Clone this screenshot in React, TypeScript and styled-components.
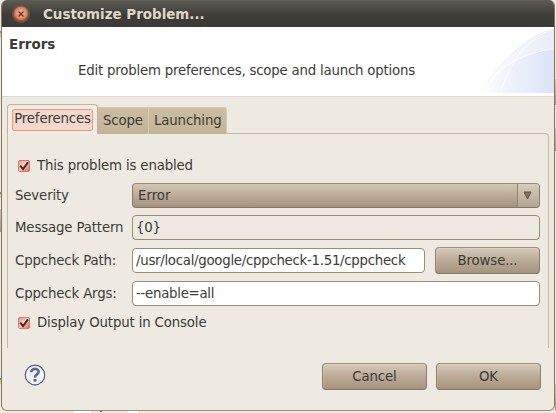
import React from "react";
import styled, { createGlobalStyle, css } from "styled-components";

const Global = createGlobalStyle`
  * { box-sizing: border-box; }
  html, body { margin: 0; padding: 0; width: 556px; height: 413px; overflow: hidden; }
  body { font-family: "DejaVu Sans", sans-serif; font-size: 13.33px; letter-spacing: -0.15px; line-height: 16px; color: #3c3b37; background: #eeeae2; }
`;

const Desktop = styled.div`
  width: 556px;
  height: 413px;
  padding: 0 1px 2px 1px;
  background:
    linear-gradient(#4aa3e0, #4aa3e0) 0 31px / 1px 2px no-repeat,
    linear-gradient(#f3c766, #f3c766) 0 33px / 1px 4px no-repeat,
    linear-gradient(#4aa3e0, #4aa3e0) 0 192px / 1px 2px no-repeat,
    linear-gradient(#f3c766, #f3c766) 0 194px / 1px 4px no-repeat,
    linear-gradient(#cfc4b4, #a89a86) 0 209px / 1px 23px no-repeat,
    linear-gradient(#4aa3e0, #4aa3e0) 0 378px / 1px 2px no-repeat,
    linear-gradient(#f3c766, #f3c766) 0 380px / 1px 4px no-repeat,
    linear-gradient(#d5cabb, #a5957f) 555px 79px / 1px 26px no-repeat,
    linear-gradient(#d5cabb, #a5957f) 555px 128px / 1px 23px no-repeat,
    linear-gradient(#d5cabb, #a5957f) 555px 384px / 1px 27px no-repeat,
    linear-gradient(#ffffff, #ffffff) 74px 411px / 17px 2px no-repeat,
    linear-gradient(#55534c, #55534c) 100px 411px / 2px 1px no-repeat,
    linear-gradient(#ffffff, #ffffff) 128px 411px / 10px 2px no-repeat,
    #efe9df;
`;

const Window = styled.div`
  width: 554px;
  height: 411px;
  display: flex;
  flex-direction: column;
  border: 1px solid #85775f;
  border-top: 0;
  border-bottom-color: #a08e6e;
  border-radius: 6px;
  background: #eeeae2;
  overflow: hidden;
`;

const TitleBar = styled.header`
  height: 27px;
  flex: none;
  display: flex;
  align-items: center;
  gap: 12px;
  padding: 1px 0 0 9px;
  color: #dfd8c8;
  font-size: 13.45px;
  letter-spacing: 0;
  font-weight: bold;
  background: linear-gradient(#66614f 0, #5b5a52 1px, #3d3c37 15px, #3c3b37 100%);
`;

const TitleText = styled.span`
  padding-top: 1px;
`;

const Banner = styled.section`
  position: relative;
  height: 69px;
  flex: none;
  padding: 10px 7px;
  background: #fff;
`;

const BannerTitle = styled.h1`
  margin: 0;
  font-size: 13.45px;
  letter-spacing: 0;
  line-height: 16px;
`;

const BannerText = styled.p`
  margin: 10px 0 0 69px;
  letter-spacing: -0.21px;
`;

const BannerArt = styled.svg`
  position: absolute;
  right: 0;
  top: 0;
`;

const Body = styled.main`
  flex: 1;
  border-top: 1px solid #e0d9cb;
  padding: 7px 5px 0;
`;

const Tabs = styled.nav`
  display: flex;
  align-items: flex-end;
  height: 30px;
  position: relative;
  z-index: 1;
`;

const Tab = styled.button<{ $active?: boolean }>`
  font: inherit;
  letter-spacing: inherit;
  color: inherit;
  margin: 0;
  border: 0;
  padding: 0 5px;
  height: 27px;
  width: ${(p) => (p.$active ? 91 : 51)}px;
  white-space: nowrap;
  background: linear-gradient(#cabda3, #c2b597);
  border-top: 1px solid #d4c8b0;
  border-right: 1px solid #d4c9b2;
  &:last-child { width: 78px; border-top-right-radius: 3px; }
  ${(p) =>
    p.$active &&
    css`
      height: 30px;
      padding: 4px 4px 5px;
      background: #f1ede5;
      border: 1px solid #bfb498;
      border-bottom: 0;
      border-radius: 4px 4px 0 0;
    `}
`;

const FocusRing = styled.span`
  display: flex;
  height: 22px;
  width: 81px;
  align-items: center;
  justify-content: center;
  border: 1px solid #f19580;
  border-radius: 2px;
  background: #f3d9cc;
  padding-bottom: 2px;
`;

const Panel = styled.div`
  height: 215px;
  margin-top: -1px;
  border: 1px solid #c6bb9f;
  border-bottom: 0;
  border-top-right-radius: 4px;
  padding: 23px 8px 0 7px;
`;

const CheckRow = styled.label`
  display: flex;
  align-items: center;
  height: 17px;
  gap: 7px;
  padding-left: 3px;
`;

const CheckMark = styled.svg`
  margin-top: 1px;
`;

const Form = styled.div`
  display: grid;
  grid-template-columns: 117px 293px 1fr;
  grid-template-rows: 25px 25px 27px 25px;
  row-gap: 7px;
  align-items: center;
  margin: 9px 0 8px;
`;

const field = css`
  height: 25px;
  width: 100%;
  border: 1px solid #9c8c71;
  border-radius: 4px;
  font: inherit;
  color: inherit;
`;

const Field = styled.input<{ $wide?: boolean; $flat?: boolean }>`
  ${field}
  letter-spacing: -0.28px;
  grid-column: ${(p) => (p.$wide ? "2 / 4" : "2")};
  background: ${(p) => (p.$flat ? "#eeeae2" : "#fff")};
  padding: 0 3px;
  outline: 0;
`;

const Select = styled.button`
  ${field}
  grid-column: 2 / 4;
  display: flex;
  align-items: center;
  justify-content: space-between;
  padding: 0 0 0 5px;
  border-color: #9b8b77 #8c7c67 #85755f;
  background: linear-gradient(#d3c6b6, #c8baa8 25%, #b8a895 55%, #a39380);
`;

const Arrow = styled.span`
  display: flex;
  width: 22px;
  height: 23px;
  align-items: center;
  justify-content: center;
  padding-right: 3px;
  border-left: 1px solid #93836e;
  border-radius: 0 3px 3px 0;
  background: linear-gradient(#d8ccbd, #b3a491);
`;

const Button = styled.button`
  font: inherit;
  letter-spacing: inherit;
  color: inherit;
  width: 105px;
  height: 27px;
  padding: 0;
  justify-self: end;
  border: 1px solid;
  border-color: #a09079 #8f7f69 #85755f;
  border-radius: 4px;
  background: linear-gradient(#d5c9ba, #c8baa8 25%, #b8a894 55%, #a5957f);
  box-shadow: inset 1px 1px 0 rgba(255, 255, 255, 0.15);
`;

const Footer = styled.footer`
  display: flex;
  align-items: center;
  gap: 9px;
  height: 27px;
  margin: 15px 8px 0 17px;
`;

const Help = styled.svg`
  margin: 0 auto 3px 0;
`;

const CloseIcon = () => (
  <svg width="20" height="20" viewBox="0 0 20 20">
    <defs>
      <radialGradient id="close" cx="50%" cy="45%" r="50%">
        <stop offset="0.2" stopColor="#f4b497" />
        <stop offset="0.75" stopColor="#e17c58" />
        <stop offset="1" stopColor="#8c4935" />
      </radialGradient>
    </defs>
    <circle cx="10" cy="10" r="9" fill="#63534b" />
    <circle cx="10" cy="10" r="7.8" fill="url(#close)" />
    <path d="M7.5 7.5l5 5M12.5 7.5l-5 5" stroke="#51382e" strokeWidth="1.3" />
  </svg>
);

const CheckIcon = () => (
  <CheckMark width="12" height="12" viewBox="0 0 12 12">
    <defs>
      <linearGradient id="check" x1="0" y1="0" x2="1" y2="1">
        <stop offset="0" stopColor="#e58f7d" />
        <stop offset="0.45" stopColor="#fbd3ca" />
        <stop offset="1" stopColor="#f25a4c" />
      </linearGradient>
    </defs>
    <rect x="0.5" y="0.5" width="11" height="11" rx="1.5" fill="url(#check)" stroke="#dd7568" />
    <path d="M2.2 5.6l2.8 3.6L10 2.4" fill="none" stroke="#3c302b" strokeWidth="2" />
  </CheckMark>
);

export default function App() {
  return (
    <>
      <Global />
      <Desktop>
        <Window>
          <TitleBar>
            <CloseIcon />
            <TitleText>Customize Problem...</TitleText>
          </TitleBar>
          <Banner>
            <BannerTitle>Errors</BannerTitle>
            <BannerText>Edit problem preferences, scope and launch options</BannerText>
            <BannerArt width="73" height="66" viewBox="0 0 73 66">
              <defs>
                <linearGradient id="art">
                  <stop offset="0" stopColor="#ffffff" />
                  <stop offset="0.4" stopColor="#eff2fb" />
                  <stop offset="1" stopColor="#dbe3f6" />
                </linearGradient>
              </defs>
              <path d="M0 64C19 36 43 10 73 1V66H0Z" fill="url(#art)" opacity="0.65" />
              <path d="M0 64C20 38 45 25 73 22V66H0Z" fill="url(#art)" />
              <path d="M0 64C19 36 43 10 73 1" fill="none" stroke="#e9ebf1" strokeWidth="0.7" />
              <path d="M20 64C28 38 43 13 73 1M0 64C20 38 45 25 73 22" fill="none" stroke="#fff" strokeOpacity="0.7" />
            </BannerArt>
          </Banner>
          <Body>
            <Tabs>
              <Tab $active>
                <FocusRing>Preferences</FocusRing>
              </Tab>
              <Tab>Scope</Tab>
              <Tab>Launching</Tab>
            </Tabs>
            <Panel>
              <CheckRow>
                <CheckIcon />
                This problem is enabled
              </CheckRow>
              <Form>
                <span>Severity</span>
                <Select>
                  Error
                  <Arrow>
                    <svg width="9" height="9" viewBox="0 0 9 9">
                      <path d="M1 1h7L4.5 8z" fill="#827462" stroke="#5d5143" />
                    </svg>
                  </Arrow>
                </Select>
                <span>Message Pattern</span>
                <Field $wide $flat readOnly value="{0}" />
                <span>Cppcheck Path:</span>
                <Field readOnly value="/usr/local/google/cppcheck-1.51/cppcheck" />
                <Button>Browse...</Button>
                <span>Cppcheck Args:</span>
                <Field $wide readOnly value="--enable=all" />
              </Form>
              <CheckRow>
                <CheckIcon />
                Display Output in Console
              </CheckRow>
            </Panel>
            <Footer>
              <Help width="22" height="22" viewBox="0 0 22 22">
                <circle cx="11" cy="11" r="9.8" fill="#f0f3fa" stroke="#596073" strokeWidth="1.2" />
                <path d="M7.2 8.2C7.2 3.8 15 3.9 14.6 8.1C14.4 10.4 11 10.4 11 13.4" fill="none" stroke="#626b84" strokeWidth="2.7" />
                <rect x="9.4" y="15" width="3.2" height="2.8" rx="1" fill="#626b84" />
              </Help>
              <Button>Cancel</Button>
              <Button>OK</Button>
            </Footer>
          </Body>
        </Window>
      </Desktop>
    </>
  );
}
